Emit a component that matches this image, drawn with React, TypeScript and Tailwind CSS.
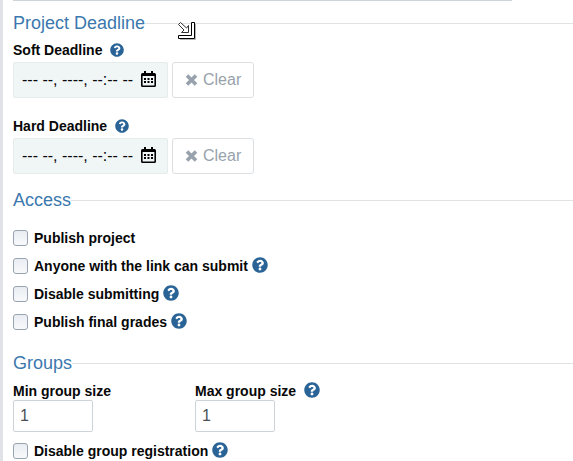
import React from "react";
import { FaQuestionCircle } from "react-icons/fa";

function Help({ small = false }: { small?: boolean }) {
  return (
    <FaQuestionCircle
      className={small ? "size-[14px] shrink-0 text-[#2a6496]" : "mb-[2px] size-4 shrink-0 text-[#2a6496]"}
    />
  );
}

function Heading({ children }: { children: string }) {
  return (
    <h2 className="flex h-6 items-center text-[18px] leading-6 text-[#3b78ae]">
      <span className="whitespace-nowrap">{children}</span>
      <span className="h-px flex-1 bg-[#e0e2e4]" />
    </h2>
  );
}

function CalendarIcon() {
  return (
    <svg className="mb-[2px] h-4 w-[15px] shrink-0" viewBox="0 0 15 16" fill="none">
      <rect x="0.8" y="2.8" width="13.4" height="12.4" rx="0.8" stroke="#000" strokeWidth="1.6" />
      <path d="M1 2.5H14V5H1ZM3 0H5V3H3ZM10 0H12V3H10Z" fill="#000" />
      <path d="M3 7H5V9H3ZM6.5 7H8.5V9H6.5ZM10 7H12V9H10ZM3 10H5V12H3ZM6.5 10H8.5V12H6.5ZM10 10H12V12H10Z" fill="#000" />
    </svg>
  );
}

function Deadline({ label }: { label: string }) {
  return (
    <div>
      <div className="flex h-5 items-center gap-2 text-[14px] font-bold leading-5">
        <span>{label}</span>
        <Help small />
      </div>
      <div className="mt-[2px] flex gap-1">
        <div className="flex h-9 w-[155px] items-center rounded-[2px] border border-[#e6ecec] bg-[#f0f5f6] pl-2 text-[16px]">
          <span className="w-[119px] whitespace-pre leading-6">--- --, ----, --:-- --</span>
          <CalendarIcon />
        </div>
        <button className="flex h-9 w-[82px] items-center rounded-[3px] border border-[#dcdfe2] bg-white pl-3 text-[16px] text-[#98a2ac]">
          <svg className="mr-[5px] h-3 w-[13px]" viewBox="0 0 13 12">
            <path d="M2 1.5L11 10.5M11 1.5L2 10.5" stroke="currentColor" strokeWidth="3.6" />
          </svg>
          Clear
        </button>
      </div>
    </div>
  );
}

function Check({ label, help = true }: { label: string; help?: boolean }) {
  return (
    <label className="flex h-7 items-center text-[14px] font-bold leading-5">
      <span className="mr-[6px] h-4 w-[15px] rounded-[3px] border border-[#9aa4b0] bg-linear-to-b from-[#e9edf2] to-[#f8f9fb]" />
      <span className="mr-1">{label}</span>
      {help && <Help />}
    </label>
  );
}

function SizeField({ label, help = false }: { label: string; help?: boolean }) {
  return (
    <div className="w-[182px]">
      <div className="flex h-5 items-center gap-2 text-[14px] font-bold leading-5">
        <span>{label}</span>
        {help && <Help />}
      </div>
      <div className="mt-[-1px] flex h-8 w-20 items-center rounded-[2px] border border-[#cdd3d6] pl-[6px] text-[16px] text-[#495057]">
        1
      </div>
    </div>
  );
}

function ResizeCursor() {
  return (
    <svg className="absolute left-[175px] top-[22px] h-[18px] w-[18px]" viewBox="0 0 18 18" fill="none">
      <path d="M2 17.5H17.5V2" stroke="#b5b5b5" />
      <path d="M13.5 0.5H16.5V16.5H0.5V13.5H13.5Z" fill="#fff" stroke="#000" />
      <path d="M0.5 2.5L2.5 0.5L8.5 6L10.5 3.5V10.5H3.5L6 8Z" fill="#fff" stroke="#333" />
    </svg>
  );
}

export default function App() {
  return (
    <main className="relative h-[461px] w-[573px] overflow-hidden border-l-[3px] border-[#dfe3e8] bg-white pl-[10px] font-['Liberation_Sans',Arial,sans-serif] text-[#080808]">
      <div className="h-[11px]">
        <div className="h-px w-[499px] bg-[#ced4da]" />
      </div>
      <Heading>Project Deadline</Heading>
      <div className="mt-[5px]">
        <Deadline label="Soft Deadline" />
      </div>
      <div className="mt-[18px]">
        <Deadline label="Hard Deadline" />
      </div>
      <div className="mt-[14px]">
        <Heading>Access</Heading>
      </div>
      <div className="mt-3">
        <Check label="Publish project" help={false} />
        <Check label="Anyone with the link can submit" />
        <Check label="Disable submitting" />
        <Check label="Publish final grades" />
      </div>
      <div className="mt-[15px]">
        <Heading>Groups</Heading>
      </div>
      <div className="mt-[6px] flex">
        <SizeField label="Min group size" />
        <SizeField label="Max group size" help />
      </div>
      <div className="mt-[5px]">
        <Check label="Disable group registration" />
      </div>
      <ResizeCursor />
    </main>
  );
}
